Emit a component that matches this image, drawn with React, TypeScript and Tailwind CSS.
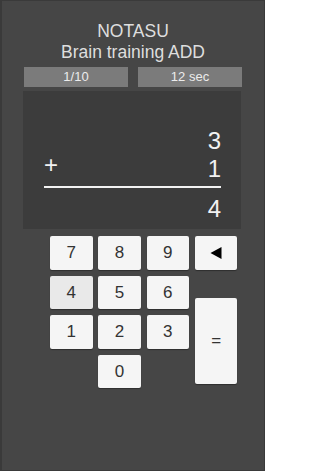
import React from 'react';

const font = { fontFamily: '"Liberation Sans", Arial, sans-serif' };

const Key: React.FC<{ label?: string; dim?: boolean; className?: string; children?: React.ReactNode }> = ({
  label,
  dim = false,
  className = '',
  children,
}) => (
  <button
    className={`flex items-center justify-center rounded-[2px] text-[17px] text-[#333333] shadow-[0_1px_1px_rgba(0,0,0,0.35)] ${
      dim ? 'bg-[#e9e9e9]' : 'bg-[#f5f5f5]'
    } ${className}`}
  >
    {children ?? label}
  </button>
);

const App: React.FC = () => {
  return (
    <div
      style={font}
      className="w-[265px] h-[471px] bg-[#464646] border border-l-2 border-[#3a3a3a] flex flex-col overflow-hidden"
    >
      {/* Title */}
      <div className="pt-[20px] text-center text-[17.5px] leading-[20.6px] text-[#dedede]">
        <div>NOTASU</div>
        <div>Brain training ADD</div>
      </div>

      {/* Status bars */}
      <div className="ml-[22px] mt-[4.5px] w-[218px] flex gap-[10px]">
        <div className="flex-1 h-[20.5px] bg-[#7b7b7b] flex items-center justify-center text-[13px] text-[#ececec]">
          1/10
        </div>
        <div className="flex-1 h-[20.5px] bg-[#7b7b7b] flex items-center justify-center text-[13px] text-[#ececec]">
          12 sec
        </div>
      </div>

      {/* Problem card */}
      <div className="ml-[21px] mt-[3.5px] w-[218px] h-[138px] bg-[#3c3c3c] pl-[21px] pr-[20px] pt-[36.7px] text-[24px] leading-[28px] text-[#f2f2f2]">
        <div className="text-right">3</div>
        <div className="flex justify-between">
          <span className="-translate-y-[4px]">+</span>
          <span>1</span>
        </div>
        <div className="mt-[2.3px] h-[2px] bg-[#f2f2f2]" />
        <div className="mt-[7.7px] text-right">4</div>
      </div>

      {/* Keypad */}
      <div className="ml-[48px] mt-[7.7px] grid grid-cols-[repeat(4,42.5px)] grid-rows-[repeat(4,33.5px)] gap-x-[5.8px] gap-y-[6px]">
        <Key label="7" />
        <Key label="8" />
        <Key label="9" />
        <Key>
          <svg width="12" height="12" viewBox="0 0 12 12">
            <polygon points="0.5,6 11.5,0 11.5,12" fill="#000" />
          </svg>
        </Key>
        <Key label="4" dim />
        <Key label="5" />
        <Key label="6" />
        <Key label="=" className="col-start-4 row-start-2 row-span-3 mt-[22px] mb-[4.4px]" />
        <Key label="1" />
        <Key label="2" />
        <Key label="3" />
        <Key label="0" className="col-start-2" />
      </div>
    </div>
  );
};

export default App;
